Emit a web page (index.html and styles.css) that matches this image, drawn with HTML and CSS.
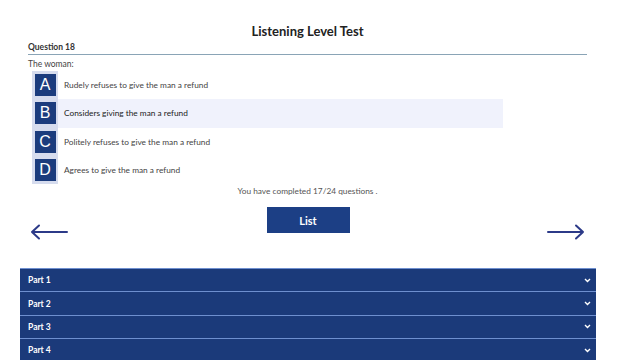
FILE: index.html
```html
<!DOCTYPE html>
<html>
<head>
<meta charset="utf-8">
<link rel="stylesheet" href="styles.css">
</head>
<body>
<div class="page">
  <div class="container">
    <h1 class="title">Listening Level Test</h1>
    <div class="qhead">Question 18</div>
    <div class="prompt">The woman:</div>
    <div class="options">
      <div class="option"><div class="letter-cell"><span class="letter">A</span></div><div class="otext">Rudely refuses to give the man a refund</div></div>
      <div class="option hover"><div class="letter-cell"><span class="letter">B</span></div><div class="otext">Considers giving the man a refund</div></div>
      <div class="option"><div class="letter-cell"><span class="letter">C</span></div><div class="otext">Politely refuses to give the man a refund</div></div>
      <div class="option"><div class="letter-cell"><span class="letter">D</span></div><div class="otext">Agrees to give the man a refund</div></div>
    </div>
    <div class="progress">You have completed 17/24 questions .</div>
    <div class="nav">
      <svg class="arrow" width="38" height="16" viewBox="0 0 38 16"><path d="M37 8H2M9 1.5L2 8l7 6.5" fill="none" stroke="#2c3a88" stroke-width="2" stroke-linecap="round" stroke-linejoin="round"/></svg>
      <button class="list-btn">List</button>
      <svg class="arrow" width="38" height="16" viewBox="0 0 38 16"><path d="M1 8h35M29 1.5L36 8l-7 6.5" fill="none" stroke="#2c3a88" stroke-width="2" stroke-linecap="round" stroke-linejoin="round"/></svg>
    </div>
  </div>
  <div class="parts">
    <div class="part"><span>Part 1</span><svg width="7" height="5" viewBox="0 0 7 5"><path d="M1 1l2.5 2.5L6 1" fill="none" stroke="#fff" stroke-width="1.4"/></svg></div>
    <div class="part"><span>Part 2</span><svg width="7" height="5" viewBox="0 0 7 5"><path d="M1 1l2.5 2.5L6 1" fill="none" stroke="#fff" stroke-width="1.4"/></svg></div>
    <div class="part"><span>Part 3</span><svg width="7" height="5" viewBox="0 0 7 5"><path d="M1 1l2.5 2.5L6 1" fill="none" stroke="#fff" stroke-width="1.4"/></svg></div>
    <div class="part"><span>Part 4</span><svg width="7" height="5" viewBox="0 0 7 5"><path d="M1 1l2.5 2.5L6 1" fill="none" stroke="#fff" stroke-width="1.4"/></svg></div>
  </div>
</div>
</body>
</html>
```
FILE: styles.css
```css
* { box-sizing: border-box; }
html, body { margin: 0; padding: 0; background: #fff; }
body { font-family: Lato, "Open Sans", "Liberation Sans", sans-serif; color: #3a3a3a; width: 640px; height: 360px; overflow: hidden; }
.page { padding-top: 22px; }
.container { width: 559px; margin-left: 28px; }
.title { margin: 0; font-size: 13px; line-height: 18px; font-weight: 700; text-align: center; color: #222; }
.qhead { font-size: 8.5px; font-weight: 700; color: #333; line-height: 12px; padding-top: 1px; padding-bottom: 1px; border-bottom: 1.5px solid #8aa4b6; }
.prompt { font-size: 8.5px; color: #444; line-height: 12px; margin-top: 3px; }
.options { margin-left: 4px; margin-top: 1px; width: 471px; }
.option { display: flex; height: 28.3px; }
.letter-cell { width: 26px; background: #d6dcee; display: flex; align-items: center; justify-content: center; }
.letter { width: 21px; height: 22px; background: #1b3c7d; color: #fff; font-family: "Liberation Sans", Arial, sans-serif; font-size: 16px; line-height: 22px; text-align: center; }
.otext { flex: 1; display: flex; align-items: center; padding-left: 6px; font-size: 8.3px; color: #444; }
.option.hover .otext { background: #f0f2fc; color: #222; }
.progress { text-align: center; font-size: 8.3px; color: #555; margin-top: 1px; line-height: 12px; }
.nav { display: flex; justify-content: space-between; align-items: flex-end; margin-top: 10px; padding: 0 2px; }
.arrow { display: block; margin-bottom: -7px; }
.list-btn { width: 83px; height: 26px; background: #1c3f85; color: #fff; border: none; font-family: Lato, "Liberation Sans", sans-serif; font-size: 11px; font-weight: 700; padding: 0; margin-left: 1px; }
.parts { width: 576px; margin-left: 20px; margin-top: 35px; }
.part { height: 23.3px; background: #1b3a7a; border-top: 1px solid #6e8fcf; display: flex; align-items: center; justify-content: space-between; padding: 0 5px 0 8px; color: #fff; font-size: 8.5px; font-weight: 700; }
.part svg { display: block; }
```
